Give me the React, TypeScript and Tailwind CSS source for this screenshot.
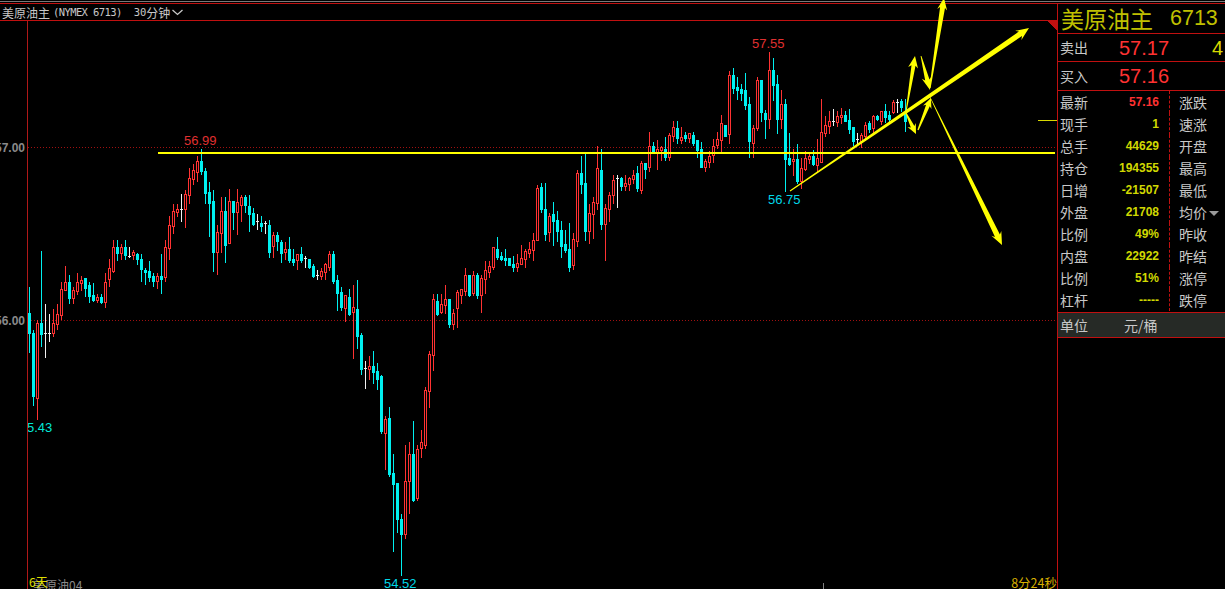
import React from "react";

type Candle = [string, number, number, number, number];

const candles: Candle[] = [
  ["c",287,313,333,352],["c",330,333,396,405],["r",320,323,398,419],["c",251,323,334,346],
  ["w",304,333,333,357],["w",314,333,333,341],["r",309,323,333,336],["r",304,314,324,329],
  ["r",282,289,315,319],["r",266,282,290,290],["c",275,282,298,303],["r",287,290,298,303],
  ["r",273,282,291,294],["r",276,280,283,290],["c",278,278,288,296],["c",282,285,296,302],
  ["c",283,295,300,301],["r",294,297,300,302],["c",294,297,302,303],["r",273,282,302,307],
  ["r",259,268,279,286],["r",240,247,271,272],["c",240,247,253,260],["r",244,247,253,259],
  ["c",240,247,255,259],["w",247,256,256,257],["r",250,252,255,259],["c",253,254,259,264],
  ["c",254,259,269,281],["c",268,270,272,284],["c",261,271,277,281],["c",273,276,281,286],
  ["r",273,276,281,288],["c",254,276,279,293],["r",240,247,277,281],["r",216,225,248,259],
  ["r",204,211,226,233],["r",204,209,212,216],["w",194,209,209,221],["r",190,194,209,227],
  ["r",168,178,195,203],["r",164,170,179,184],["r",156,161,172,181],["c",149,161,171,174],
  ["c",168,171,193,203],["c",182,192,203,236],["c",190,201,252,271],["r",225,232,252,274],
  ["r",197,211,233,252],["c",197,211,245,262],["r",189,201,243,243],["c",201,201,212,229],
  ["r",189,202,212,234],["r",195,197,205,221],["c",195,197,205,212],["c",195,206,214,231],
  ["c",208,213,224,225],["w",214,221,221,229],["c",216,223,226,231],["w",221,223,223,233],
  ["c",220,225,252,257],["r",232,235,246,257],["c",232,235,241,250],["c",240,242,253,262],
  ["r",242,249,252,259],["c",237,249,260,262],["c",249,259,262,265],["r",254,254,260,269],
  ["c",247,254,260,262],["w",256,258,258,267],["c",259,259,267,268],["c",264,266,276,277],
  ["w",270,275,275,279],["r",268,271,276,279],["r",263,264,272,279],["r",251,254,267,270],
  ["c",251,254,281,283],["c",275,280,293,310],["c",287,292,307,310],["r",295,295,308,321],
  ["c",289,297,314,315],["r",285,307,312,358],["c",280,309,336,348],["c",333,335,369,374],
  ["w",361,368,368,388],["r",356,366,369,379],["c",351,366,372,383],["c",363,371,379,389],
  ["c",375,376,431,433],["r",416,419,433,469],["c",407,418,474,476],["c",454,473,484,551],
  ["c",483,483,519,532],["c",514,519,534,575],["r",445,481,534,538],["r",442,454,481,513],
  ["c",421,454,500,501],["r",445,449,498,500],["r",430,442,448,457],["r",387,390,445,448],
  ["r",351,354,391,407],["r",294,299,355,370],["c",294,301,314,315],["r",294,304,312,313],
  ["r",285,299,305,313],["c",299,299,324,327],["r",309,313,324,329],["r",290,292,308,327],
  ["r",289,289,295,303],["r",268,275,291,295],["c",275,275,295,296],["r",271,275,293,295],
  ["c",273,275,295,298],["r",275,278,295,312],["r",261,270,279,293],["r",261,266,272,277],
  ["r",247,247,267,269],["c",237,249,257,259],["c",252,256,259,260],["c",249,258,260,265],
  ["c",258,258,265,265],["c",256,264,267,271],["r",254,263,267,271],["r",245,258,264,264],
  ["r",249,251,259,267],["r",242,249,253,257],["r",233,240,250,260],["r",185,188,240,240],
  ["c",183,187,209,212],["c",183,209,234,240],["r",213,216,232,241],["c",202,214,221,245],
  ["c",211,220,231,241],["c",221,230,246,257],["c",230,244,250,252],["c",223,249,267,271],
  ["r",233,239,265,269],["r",170,173,241,246],["c",156,173,184,193],["c",154,183,231,240],
  ["r",204,213,231,243],["r",197,202,214,238],["r",146,168,203,209],["c",149,170,224,229],
  ["r",204,208,224,260],["r",192,195,209,221],["r",175,180,195,203],["w",175,178,178,207],
  ["c",177,178,186,190],["r",175,183,186,190],["r",177,178,184,190],["r",170,175,179,183],
  ["c",166,173,188,191],["r",161,163,190,193],["c",163,163,169,178],["r",132,146,167,171],
  ["c",142,146,152,152],["r",140,149,152,169],["r",146,147,150,160],["c",137,149,157,160],
  ["r",133,135,157,160],["r",121,127,136,141],["c",121,128,138,143],["r",127,137,140,143],
  ["c",132,135,138,141],["r",133,133,138,142],["c",132,135,143,145],["c",140,140,150,157],
  ["c",142,149,167,167],["r",159,161,167,171],["r",151,156,162,167],["r",139,146,155,162],
  ["r",132,139,145,148],["r",115,123,140,152],["c",125,125,136,136],["r",71,75,134,143],
  ["c",68,75,88,93],["c",77,87,90,99],["c",84,89,93,100],["c",73,90,105,109],
  ["c",97,104,141,157],["r",125,128,143,157],["r",77,80,128,130],["c",80,80,112,121],
  ["c",110,113,119,138],["r",52,70,119,128],["c",58,70,85,100],["c",75,84,119,133],
  ["r",90,104,119,128],["c",99,104,159,191],["c",133,158,164,165],["r",149,159,161,175],
  ["c",144,159,181,183],["r",158,168,181,188],["r",151,158,169,170],["r",152,156,159,163],
  ["c",150,156,164,165],["r",139,158,165,172],["r",99,132,162,162],["r",116,125,133,136],
  ["r",111,121,126,133],["w",109,121,121,125],["r",111,116,122,126],["r",108,115,117,123],
  ["c",111,115,121,121],["c",109,120,129,133],["c",127,127,141,145],["w",133,139,139,145],
  ["r",133,135,141,147],["r",122,125,136,140],["c",121,123,129,132],["r",115,116,128,133],
  ["c",115,116,119,120],["r",111,111,121,124],["c",104,111,117,122],["c",111,115,119,122],
  ["r",100,102,112,113],["w",99,102,102,112],["c",99,101,107,111],["c",99,113,121,131],
];

const colors: Record<string, string> = { c: "#00f0f0", r: "#ff3232", w: "#f0f0f0" };

function CandleMark({ d, i }: { d: Candle; i: number }) {
  const [k, high, top, bottom, low] = d;
  const x = 29 + 4 * i;
  const fill = colors[k];
  return (
    <g fill={fill}>
      <rect x={x} y={high} width={1} height={Math.max(low - high + 1, 1)} />
      <rect x={x - 1} y={top} width={3} height={bottom - top + 1} />
      {k === "r" && bottom - top >= 2 ? (
        <rect x={x} y={top + 1} width={1} height={bottom - top - 1} fill="#000" />
      ) : null}
    </g>
  );
}

function arrow(
  x0: number, y0: number, x1: number, y1: number,
  w0: number, w1: number, headLen: number, headW: number
) {
  const len = Math.hypot(x1 - x0, y1 - y0);
  const ux = (x1 - x0) / len;
  const uy = (y1 - y0) / len;
  const nx = -uy;
  const ny = ux;
  const bx = x1 - ux * headLen;
  const by = y1 - uy * headLen;
  const nbx = x1 - ux * (headLen * 0.8);
  const nby = y1 - uy * (headLen * 0.8);
  const pts: [number, number][] = [
    [x0 + (nx * w0) / 2, y0 + (ny * w0) / 2],
    [nbx + (nx * w1) / 2, nby + (ny * w1) / 2],
    [bx + (nx * headW) / 2, by + (ny * headW) / 2],
    [x1, y1],
    [bx - (nx * headW) / 2, by - (ny * headW) / 2],
    [nbx - (nx * w1) / 2, nby - (ny * w1) / 2],
    [x0 - (nx * w0) / 2, y0 - (ny * w0) / 2],
  ];
  return pts.map((p) => p.map((v) => v.toFixed(1)).join(",")).join(" ");
}

const arrows = [
  arrow(790, 191, 1029, 28, 1.2, 5.5, 13, 11),
  arrow(906, 112, 915, 56, 0.8, 4, 12, 10),
  arrow(921, 56, 930, 90, 0.8, 4.5, 13, 10),
  arrow(930, 88, 944, -2, 1.2, 5, 12, 10),
  arrow(906, 113, 916, 134, 1.2, 4, 10, 9),
  arrow(918, 130, 931, 98, 1.2, 4, 10, 9),
  arrow(930, 97, 1002, 245, 0.6, 5.5, 13, 11),
];

const rows: [string, string, string, boolean][] = [
  ["最新", "57.16", "涨跌", true],
  ["现手", "1", "速涨", false],
  ["总手", "44629", "开盘", false],
  ["持仓", "194355", "最高", false],
  ["日增", "-21507", "最低", false],
  ["外盘", "21708", "均价", false],
  ["比例", "49%", "昨收", false],
  ["内盘", "22922", "昨结", false],
  ["比例", "51%", "涨停", false],
  ["杠杆", "-----", "跌停", false],
];

const cjk = "font-['Noto_Sans_CJK_SC','Liberation_Sans',sans-serif]";
const num = "font-['Liberation_Sans',Arial,sans-serif]";

function ChartLabel({ cls, children }: { cls: string; children: React.ReactNode }) {
  return (
    <div className={`absolute text-[13px] leading-[13px] ${num} ${cls}`}>{children}</div>
  );
}

export default function App() {
  return (
    <div className={`relative w-[1225px] h-[589px] bg-black overflow-hidden flex flex-col ${cjk}`}>
      <div className="h-[3px] shrink-0 mt-px border-t border-[#7a7a7a] bg-black">
        <div className="mt-px h-px bg-[#c01010]" />
      </div>
      <div className="flex-1 min-h-0 flex">
        <div className="w-[1057px] flex flex-col min-w-0">
          <div className="h-[17px] shrink-0 border-b border-[#c01010] flex items-center pl-[2px] text-[#c8c8c8] text-[12px] leading-[15px] whitespace-nowrap">
            <span>美原油主</span>
            <span className="ml-[3px] font-['DejaVu_Sans_Mono',monospace] text-[10.5px] tracking-[-0.6px]">(NYMEX 6713)</span>
            <span className="ml-[12px] font-['DejaVu_Sans_Mono',monospace] text-[10.5px]">30</span>
            <span>分钟</span>
            <svg width="11" height="7" viewBox="0 0 11 7" className="ml-[2px]">
              <polyline points="0.5,1 5.5,5.5 10.5,1" fill="none" stroke="#c8c8c8" strokeWidth="1.3" />
            </svg>
          </div>
          <div className="flex-1 min-h-0 flex">
            <div className="relative w-[27px] shrink-0 overflow-hidden">
              <div className={`absolute right-[2px] top-[121px] text-[#8a8a8a] font-bold text-[12px] leading-[12px] ${num}`}>57.00</div>
              <div className={`absolute right-[2px] top-[294px] text-[#8a8a8a] font-bold text-[12px] leading-[12px] ${num}`}>56.00</div>
            </div>
            <div className="relative flex-1 min-w-0 border-l border-[#b01818] overflow-hidden">
              <svg width="1029" height="568" viewBox="28 21 1029 568" shapeRendering="crispEdges" className="block">
                <line x1="28" y1="147.5" x2="1057" y2="147.5" stroke="#a01010" strokeWidth="1" strokeDasharray="1 2" />
                <line x1="28" y1="320.5" x2="1057" y2="320.5" stroke="#a01010" strokeWidth="1" strokeDasharray="1 2" />
                {candles.map((d, i) => (
                  <CandleMark key={i} d={d} i={i} />
                ))}
                <rect x="158" y="152" width="897" height="2" fill="#ffff00" />
                <rect x="1038" y="120" width="19" height="1" fill="#d8d800" />
                <polygon points="1047,21 1057,21 1057,31" fill="#c01010" />
                <rect x="823" y="583" width="1" height="6" fill="#808080" />
              </svg>
              <ChartLabel cls="left-[156px] top-[113px] text-[#e03030]">56.99</ChartLabel>
              <ChartLabel cls="left-[724px] top-[16px] text-[#e03030]">57.55</ChartLabel>
              <ChartLabel cls="left-[740px] top-[172px] text-[#00d8e8]">56.75</ChartLabel>
              <ChartLabel cls="left-[-1px] top-[400px] text-[#00e8d8]">5.43</ChartLabel>
              <ChartLabel cls="left-[356px] top-[556px] text-[#00d8e8]">54.52</ChartLabel>
              <div className="absolute left-[5px] top-[557px] text-[12px] leading-[14px] text-[#8a8a8a] whitespace-nowrap">
                美原油04
              </div>
              <div className="absolute left-[1px] top-[554px] text-[12px] leading-[14px] text-[#e0e000] whitespace-nowrap">
                6天
              </div>
              <div className="absolute right-[0px] top-[555px] text-[12.5px] leading-[14px] text-[#d8b000] whitespace-nowrap">
                8分24秒
              </div>
            </div>
          </div>
        </div>
        <div className="w-[168px] shrink-0 border-l border-[#c01010] flex flex-col">
          <div className="h-[30px] shrink-0 border-b border-[#c01010] flex items-center pl-[3px] pb-[2px] text-[#c0c000] whitespace-nowrap">
            <span className="text-[23px] leading-[28px]">美原油主</span>
            <span className={`ml-[17px] text-[21.5px] leading-[28px] ${num}`}>6713</span>
          </div>
          <div className="h-[28px] shrink-0 border-b border-[#c01010] flex items-center pl-[2px] pr-[2px]">
            <span className="w-[59px] text-[14px] text-[#c8c8c8]">卖出</span>
            <span className={`text-[20px] leading-[24px] text-[#ff3232] ${num}`}>57.17</span>
            <span className={`ml-auto text-[20px] leading-[24px] text-[#d8d800] ${num}`}>4</span>
          </div>
          <div className="h-[29px] shrink-0 border-b border-[#c01010] flex items-center pl-[2px] pr-[2px]">
            <span className="w-[59px] text-[14px] text-[#c8c8c8]">买入</span>
            <span className={`text-[20px] leading-[24px] text-[#ff3232] ${num}`}>57.16</span>
          </div>
          <div className="h-[221px] shrink-0 flex flex-col">
            {rows.map(([a, v, b, red], i) => (
              <div key={i} className="h-[22px] shrink-0 flex items-center pl-[2px]">
                <span className="w-[28px] shrink-0 whitespace-nowrap text-[14px] leading-[18px] text-[#c8c8c8]">{a}</span>
                <span
                  className={`w-[71px] shrink-0 text-right text-[12px] leading-[18px] font-bold ${num} ${
                    red ? "text-[#ff3232]" : "text-[#d0d800]"
                  }`}
                >
                  {v}
                </span>
                <span className="ml-[10px] pl-[9px] h-[22px] flex items-center whitespace-nowrap border-l border-dashed border-[#c01010] text-[14px] leading-[18px] text-[#c8c8c8]">
                  {b}
                  {a === "外盘" ? (
                    <svg width="10" height="5" viewBox="0 0 10 5" className="ml-[2px] mt-[3px]">
                      <polygon points="0,0 10,0 5,5" fill="#9a9a9a" />
                    </svg>
                  ) : null}
                </span>
              </div>
            ))}
          </div>
          <div className="h-[26px] shrink-0 border-y border-[#c01010] bg-[#262a26] flex items-center pl-[2px] text-[14px] leading-[18px] text-[#c8c8c8]">
            <span className="w-[64px]">单位</span>
            <span>元/桶</span>
          </div>
        </div>
      </div>
      <svg width="1225" height="589" viewBox="0 0 1225 589" className="absolute inset-0 pointer-events-none">
        {arrows.map((p, i) => (
          <polygon key={i} points={p} fill="#ffff00" />
        ))}
      </svg>
    </div>
  );
}
